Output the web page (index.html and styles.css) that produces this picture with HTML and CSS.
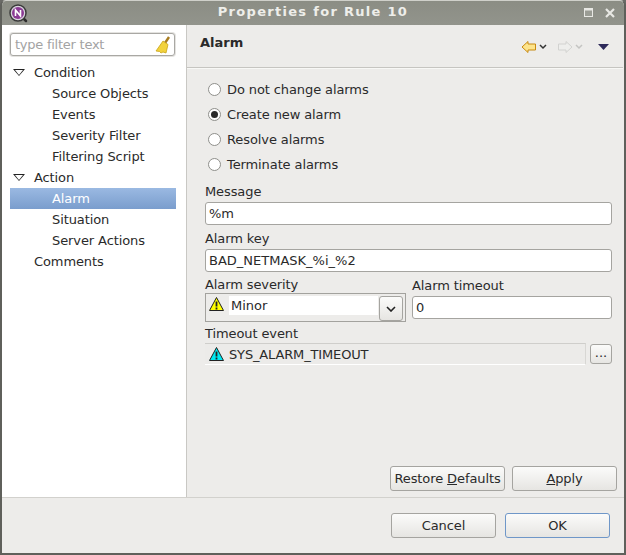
FILE: index.html
```html
<!DOCTYPE html>
<html lang="en">
<head>
    <meta charset="UTF-8">
    <title>Properties for Rule 10</title>
    <link rel="stylesheet" href="styles.css">
</head>
<body>
    <div class="window">
        <div class="titlebar">
            <svg class="app-icon" width="20" height="20" viewBox="0 0 20 20">
                <path d="M14 14l4 4" stroke="#2c2c2c" stroke-width="2.5" stroke-linecap="round"/>
                <circle cx="10" cy="10" r="8" fill="#d8d4dc" stroke="#3a3a3a" stroke-width="1.5"/>
                <circle cx="10" cy="10" r="6" fill="#8b3a94"/>
                <path d="M7.5 13V7l5 6V7" fill="none" stroke="#fff" stroke-width="1.6"/>
            </svg>
            <div class="title">Properties for Rule 10</div>
            <svg class="win-btn" width="10" height="10" viewBox="0 0 10 10">
                <rect x="0.5" y="0.5" width="8" height="8" fill="#9a9c94" stroke="#e8e8e4"/>
                <rect x="0.5" y="0.5" width="8" height="2" fill="#e8e8e4"/>
            </svg>
            <svg class="win-btn" width="10" height="10" viewBox="0 0 10 10">
                <path d="M1 1l8 8M9 1l-8 8" stroke="#e8e8e4" stroke-width="2.2"/>
            </svg>
        </div>

        <div class="main">
            <div class="sidebar">
                <div class="filter">
                    <span class="filter-text">type filter text</span>
                    <svg width="16" height="18" viewBox="0 0 16 18">
                        <path d="M10 7l4-6" stroke="#a87c20" stroke-width="2.4"/>
                        <path d="M8 5l5 3.5-2 8.5-3-1-2 1-1.5-1.5L1 15z" fill="#f2d23c" stroke="#c9a418" stroke-width="0.8"/>
                    </svg>
                </div>
                <ul class="tree">
                    <li class="tree-row"><span class="twisty"></span>Condition</li>
                    <li class="tree-row child">Source Objects</li>
                    <li class="tree-row child">Events</li>
                    <li class="tree-row child">Severity Filter</li>
                    <li class="tree-row child">Filtering Script</li>
                    <li class="tree-row"><span class="twisty"></span>Action</li>
                    <li class="tree-row child selected">Alarm</li>
                    <li class="tree-row child">Situation</li>
                    <li class="tree-row child">Server Actions</li>
                    <li class="tree-row leaf">Comments</li>
                </ul>
            </div>

            <div class="content">
                <div class="page-header">
                    <h1>Alarm</h1>
                    <div class="nav-icons">
                        <svg width="16" height="14" viewBox="0 0 16 14">
                            <path d="M1 7l6-5.5V4h7.5v6H7v2.5z" fill="#fde48c" stroke="#c88a10"/>
                        </svg>
                        <svg class="chev" width="8" height="6" viewBox="0 0 8 6">
                            <path d="M1 1l3 3 3-3" fill="none" stroke="#333" stroke-width="1.5"/>
                        </svg>
                        <svg class="next" width="16" height="14" viewBox="0 0 16 14">
                            <path d="M15 7L9 1.5V4H1.5v6H9v2.5z" fill="#eeeeec" stroke="#d2d2d0"/>
                        </svg>
                        <svg class="chev" width="8" height="6" viewBox="0 0 8 6">
                            <path d="M1 1l3 3 3-3" fill="none" stroke="#c4c4c2" stroke-width="1.5"/>
                        </svg>
                        <svg class="menu" width="11" height="6" viewBox="0 0 11 6">
                            <path d="M0 0h11L5.5 6z" fill="#2e2a5a"/>
                        </svg>
                    </div>
                </div>

                <div class="page-body">
                    <div class="radios">
                        <div class="radio-row"><span class="radio"></span>Do not change alarms</div>
                        <div class="radio-row"><span class="radio checked"></span>Create new alarm</div>
                        <div class="radio-row"><span class="radio"></span>Resolve alarms</div>
                        <div class="radio-row"><span class="radio"></span>Terminate alarms</div>
                    </div>

                    <label class="field-label">Message</label>
                    <div class="input">%m</div>
                    <label class="field-label">Alarm key</label>
                    <div class="input">BAD_NETMASK_%i_%2</div>

                    <div class="severity-row">
                        <div class="severity-col">
                            <label class="field-label">Alarm severity</label>
                            <div class="combo">
                                <svg class="tri" width="15" height="14" viewBox="0 0 15 14">
                                    <path d="M7.5 0.5L14.5 13.5H0.5z" fill="#ffff00" stroke="#222" stroke-linejoin="round"/>
                                    <path d="M7.5 4.5v5M7.5 10.5v2" stroke="#222" stroke-width="1.8"/>
                                </svg>
                                <div class="combo-value">Minor</div>
                                <div class="small-btn combo-btn">
                                    <svg width="10" height="6" viewBox="0 0 10 6">
                                        <path d="M1 1l4 4 4-4" fill="none" stroke="#222" stroke-width="1.6"/>
                                    </svg>
                                </div>
                            </div>
                        </div>
                        <div class="timeout-col">
                            <label class="field-label">Alarm timeout</label>
                            <div class="input">0</div>
                        </div>
                    </div>

                    <label class="field-label event-label">Timeout event</label>
                    <div class="event-row">
                        <div class="event-field">
                            <svg class="tri" width="15" height="14" viewBox="0 0 15 14">
                                <path d="M7.5 0.5L14.5 13.5H0.5z" fill="#00e8f0" stroke="#222" stroke-linejoin="round"/>
                                <path d="M7.5 4.5v5M7.5 10.5v2" stroke="#222" stroke-width="1.8"/>
                            </svg>
                            SYS_ALARM_TIMEOUT
                        </div>
                        <div class="small-btn browse-btn">...</div>
                    </div>

                    <div class="page-buttons">
                        <button class="btn restore">Restore <u>D</u>efaults</button>
                        <button class="btn apply"><u>A</u>pply</button>
                    </div>
                </div>
            </div>
        </div>

        <div class="footer">
            <button class="btn dialog-btn">Cancel</button>
            <button class="btn dialog-btn default">OK</button>
        </div>
    </div>
</body>
</html>
```

FILE: styles.css
```css
* {
    box-sizing: border-box;
}

html, body {
    margin: 0;
    height: 100%;
}

body {
    font-family: "DejaVu Sans", sans-serif;
    font-size: 13px;
    color: #2a2a2a;
    background-color: #6a6a66;
}

.window {
    display: flex;
    flex-direction: column;
    width: 626px;
    height: 555px;
    background-color: #edecea;
    border: 2px solid #5f605b;
    border-top: 1px solid #cfd0ca;
    border-radius: 6px 6px 0 0;
    overflow: hidden;
}

.titlebar {
    display: flex;
    align-items: center;
    height: 24px;
    padding: 0 9px 0 6px;
    background: linear-gradient(#8b8d84, #92948c);
    color: #eeeeea;
    flex-shrink: 0;
}

.app-icon {
    flex-shrink: 0;
}

.title {
    flex: 1;
    text-align: center;
    font-weight: bold;
    letter-spacing: 1.3px;
    padding: 0 0 3px 25px;
}

.win-btn {
    margin-left: 11px;
}

.main {
    display: flex;
    height: 473px;
    border-bottom: 1px solid #d2d1cd;
}

.sidebar {
    width: 185px;
    background-color: #fff;
    border-right: 1px solid #c9c8c4;
    padding: 8px 10px 0 8px;
    flex-shrink: 0;
}

.filter {
    display: flex;
    align-items: center;
    justify-content: space-between;
    width: 165px;
    height: 23px;
    padding: 0 3px 0 4px;
    background-color: #fff;
    border: 1px solid #a9a8a4;
    border-radius: 3px;
    box-shadow: 0 0 0 1px #e4e3e0;
}

.filter-text {
    color: #a3a3a3;
    letter-spacing: -0.25px;
}

.tree {
    list-style: none;
    margin: 6px 0 0;
    padding: 0;
    letter-spacing: -0.1px;
}

.tree-row {
    display: flex;
    align-items: center;
    height: 21px;
    padding-left: 24px;
}

.tree-row.child {
    padding-left: 42px;
}

.twisty {
    position: relative;
    width: 0;
    height: 0;
    margin: 0 9px 0 -21px;
    border-left: 6px solid transparent;
    border-right: 6px solid transparent;
    border-top: 7px solid #222;
}

.twisty::after {
    content: "";
    position: absolute;
    left: -4px;
    top: -6px;
    border-left: 4px solid transparent;
    border-right: 4px solid transparent;
    border-top: 5px solid #fff;
}

.tree-row.selected {
    color: #fff;
    background: linear-gradient(#9ab9e2, #7a9dcd);
}

.content {
    flex: 1;
    display: flex;
    flex-direction: column;
}

.page-header {
    display: flex;
    justify-content: space-between;
    height: 43px;
    margin-right: 1px;
    padding: 10px 14px 0 13px;
    border-bottom: 1px solid #c6c5c1;
    box-shadow: 0 1px 0 #f8f8f6;
}

h1 {
    margin: 0;
    font-size: 13px;
    font-weight: bold;
}

.nav-icons {
    display: flex;
    align-items: center;
    height: 14px;
    margin-top: 5px;
}

.nav-icons .chev {
    margin-left: 2px;
}

.nav-icons .next {
    margin-left: 10px;
}

.nav-icons .menu {
    margin-left: 15px;
}

.page-body {
    flex: 1;
    display: flex;
    flex-direction: column;
    padding: 9px 12px 6px 18px;
}

.radios {
    margin-bottom: 7px;
    letter-spacing: -0.1px;
}

.radio-row {
    display: flex;
    align-items: center;
    height: 25px;
}

.radio {
    position: relative;
    width: 13px;
    height: 13px;
    margin: 0 6px 0 3px;
    background-color: #fff;
    border: 1px solid #8f8f8b;
    border-radius: 50%;
}

.radio.checked::after {
    content: "";
    position: absolute;
    left: 2px;
    top: 2px;
    width: 7px;
    height: 7px;
    background-color: #2a2a2a;
    border-radius: 50%;
}

.field-label {
    display: block;
    height: 18px;
    line-height: 16px;
    letter-spacing: -0.1px;
}

.input {
    height: 23px;
    line-height: 21px;
    margin-bottom: 6px;
    padding: 0 3px;
    background-color: #fff;
    border: 1px solid #a5a4a0;
    border-radius: 3px;
}

.severity-row {
    display: flex;
    gap: 6px;
    margin-top: -1px;
}

.severity-col {
    width: 201px;
}

.severity-col .field-label {
    height: 16px;
}

.timeout-col {
    flex: 1;
    padding-top: 1px;
}

.timeout-col .input {
    margin-bottom: 0;
}

.combo {
    display: flex;
    align-items: flex-start;
    height: 29px;
    padding: 2px 2px 0 3px;
    border: 1px solid #a3a29e;
}

.combo .tri {
    margin-top: 1px;
    flex-shrink: 0;
}

.combo-value {
    width: 149px;
    height: 19px;
    line-height: 19px;
    margin-left: 5px;
    padding-left: 2px;
    background-color: #fff;
}

.small-btn {
    display: flex;
    align-items: center;
    justify-content: center;
    background: linear-gradient(#fbfbfa, #e6e5e2);
    border: 1px solid #a5a4a0;
    border-radius: 3px;
}

.combo-btn {
    width: 24px;
    height: 25px;
    margin-left: 1px;
}

.event-label {
    margin-top: 4px;
    height: 17px;
}

.event-row {
    display: flex;
    align-items: center;
}

.event-field {
    display: flex;
    align-items: center;
    gap: 5px;
    width: 381px;
    height: 22px;
    padding-left: 4px;
    letter-spacing: -0.15px;
    border-top: 1px solid #cfcecb;
    border-right: 1px solid #d8d7d4;
    border-bottom: 1px solid #fff;
    background-color: #ecebe9;
}

.browse-btn {
    width: 22px;
    height: 20px;
    margin-left: 4px;
    line-height: 14px;
    padding-bottom: 2px;
}

.page-buttons {
    display: flex;
    justify-content: flex-end;
    gap: 7px;
    margin-top: auto;
    margin-right: -5px;
}

.btn {
    height: 25px;
    padding: 0;
    font-family: inherit;
    font-size: 13px;
    letter-spacing: -0.1px;
    color: #2a2a2a;
    background: linear-gradient(#fbfbfa, #e6e5e2);
    border: 1px solid #a5a4a0;
    border-radius: 3px;
}

.restore {
    width: 115px;
}

.apply {
    width: 105px;
}

.footer {
    display: flex;
    justify-content: flex-end;
    gap: 9px;
    height: 55px;
    padding: 15px 14px 0 0;
}

.dialog-btn {
    width: 105px;
}

.dialog-btn.default {
    border-color: #6f97c8;
}
```
